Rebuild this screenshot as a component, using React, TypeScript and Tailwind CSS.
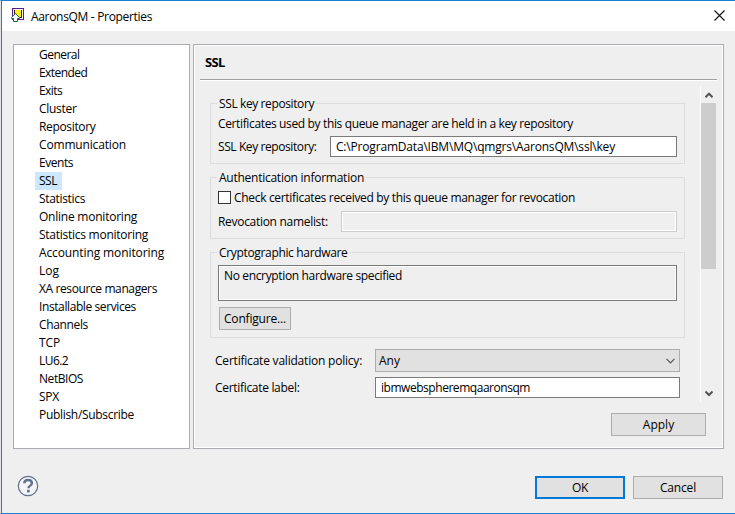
import type { ReactNode } from "react";

const pages: { label: string; tracking: string }[] = [
  { label: "General", tracking: "tracking-[-0.52px]" },
  { label: "Extended", tracking: "tracking-[-0.57px]" },
  { label: "Exits", tracking: "tracking-[-0.57px]" },
  { label: "Cluster", tracking: "tracking-[-0.3px]" },
  { label: "Repository", tracking: "tracking-[-0.34px]" },
  { label: "Communication", tracking: "tracking-[-0.16px]" },
  { label: "Events", tracking: "tracking-[-0.46px]" },
  { label: "SSL", tracking: "tracking-[-0.47px]" },
  { label: "Statistics", tracking: "tracking-[-0.33px]" },
  { label: "Online monitoring", tracking: "tracking-[-0.23px]" },
  { label: "Statistics monitoring", tracking: "tracking-[-0.26px]" },
  { label: "Accounting monitoring", tracking: "tracking-[-0.11px]" },
  { label: "Log", tracking: "tracking-[0px]" },
  { label: "XA resource managers", tracking: "tracking-[-0.39px]" },
  { label: "Installable services", tracking: "tracking-[-0.4px]" },
  { label: "Channels", tracking: "tracking-[-0.35px]" },
  { label: "TCP", tracking: "tracking-[-0.13px]" },
  { label: "LU6.2", tracking: "tracking-[-0.55px]" },
  { label: "NetBIOS", tracking: "tracking-[-0.44px]" },
  { label: "SPX", tracking: "tracking-[-0.24px]" },
  { label: "Publish/Subscribe", tracking: "tracking-[-0.31px]" },
];

function Group({ title, tracking, legendWidth, className, children }: {
  title: string;
  tracking: string;
  legendWidth: string;
  className: string;
  children: ReactNode;
}) {
  return (
    <section className={`ml-[10px] w-[475px] border border-t-0 border-[#dcdcdc] ${className}`}>
      <div className="flex h-px">
        <div className="-ml-px w-[7px] bg-[#dcdcdc]" />
        <div className={`flex items-center pl-[2px] ${legendWidth} ${tracking}`}>
          <span className="pt-px">{title}</span>
        </div>
        <div className="-mr-px flex-1 bg-[#dcdcdc]" />
      </div>
      {children}
    </section>
  );
}

function Button({ className, children }: { className: string; children: ReactNode }) {
  return (
    <button className={`flex h-[23px] items-center justify-center bg-[#e1e1e1] pt-px ${className}`}>{children}</button>
  );
}

export default function App() {
  return (
    <div className="flex h-[514px] w-[735px] flex-col overflow-hidden border-b border-l border-t border-b-[#1a7fd0] border-l-[#dfe3e8] border-t-[#1a7fd0] bg-[#efefef] font-['Open_Sans','Noto_Sans',sans-serif] text-[12px] leading-[18px] whitespace-nowrap text-black">
      <div className="flex min-h-0 flex-1 flex-col border-l border-[#1a7fd0]">
        <header className="flex h-[30px] shrink-0 items-center bg-white pl-[9px]">
          <svg width="14" height="14" viewBox="0 0 14 14" className="mb-[2px]">
            <rect x="1.5" y=".5" width="11" height="11" fill="#fff" stroke="#5c1a82" />
            <rect x="3" y="2" width="8" height="7" fill="#ffee12" />
            <path d="M3.5 2v5M10.5 2v7.500M6 9.500h5" stroke="#222" fill="none" />
            <path d="M4.500 5.600L.6 9.500V10.500H2.500V13.500H6.500V10.500H8.500V9.500Z" fill="#fff" stroke="#0b6e37" />
          </svg>
          <h1 className="ml-[6px] pt-px tracking-[-0.32px]">AaronsQM - Properties</h1>
          <svg width="11" height="11" viewBox="0 0 11 11" className="mb-px ml-auto mr-[10px]">
            <path d="M.5.5l10 10M10.500.5l-10 10" stroke="#111" strokeWidth="1.1" />
          </svg>
        </header>

        <main className="mt-[13px] flex h-[405px] shrink-0 gap-[3px] pl-[11px]">
          <nav className="w-[177px] border border-[#a9abb0] bg-white pl-[21px] pt-px">
            {pages.map((p) => (
              <div
                key={p.label}
                className={`h-[18px] w-fit pl-1 pr-[5px] ${p.tracking} ${p.label === "SSL" ? "bg-[#cce8ff]" : ""}`}
              >
                {p.label}
              </div>
            ))}
          </nav>

          <div className="w-[531px] border border-[#a9abb0]">
            <div className="flex h-full flex-col border border-white">
              <h2 className="mx-[5px] flex h-[34px] shrink-0 items-center border-b border-[#a0a0a0] pb-px pl-[5px] text-[13px] font-bold tracking-[-0.6px] shadow-[0_1px_0_#fff]">
                SSL
              </h2>

              <div className="ml-[5px] mt-[5px] flex h-[318px] pt-px">
                <div className="w-[500px] shrink-0 pt-[17px]">
                  <Group title="SSL key repository" tracking="tracking-[-0.39px]" legendWidth="w-[99px]" className="h-[61px]">
                    <p className="ml-[7px] mt-[11px] tracking-[-0.363px]">
                      Certificates used by this queue manager are held in a key repository
                    </p>
                    <div className="ml-[7px] mt-[3px] flex items-center">
                      <label className="w-[112px] pt-px tracking-[-0.41px]">SSL Key repository:</label>
                      <div className="h-[21px] w-[347px] border border-[#7a7a7a] bg-white pl-[5px] pt-px tracking-[-0.184px]">
                        C:\ProgramData\IBM\MQ\qmgrs\AaronsQM\ssl\key
                      </div>
                    </div>
                  </Group>

                  <Group title="Authentication information" tracking="tracking-[-0.255px]" legendWidth="w-[148px]" className="mt-[13px] h-[62px]">
                    <div className="ml-[7px] mt-[11px] flex items-start">
                      <span className="mt-[2px] size-[13px] border border-[#333] bg-white" />
                      <span className="ml-[3px] tracking-[-0.318px]">
                        Check certificates received by this queue manager for revocation
                      </span>
                    </div>
                    <div className="ml-[7px] mt-[4px] flex items-center">
                      <label className="w-[123px] pt-px tracking-[-0.3px]">Revocation namelist:</label>
                      <div className="h-[21px] w-[336px] border border-[#cccccc] shadow-[inset_0_0_0_1px_#fff]" />
                    </div>
                  </Group>

                  <Group title="Cryptographic hardware" tracking="tracking-[-0.335px]" legendWidth="w-[132px]" className="mt-[13px] h-[86px]">
                    <div className="ml-[7px] mt-[12px] h-[36px] w-[459px] border border-[#7a7a7a] pl-[5px] pt-px tracking-[-0.35px] shadow-[inset_0_0_0_1px_#fff]">
                      No encryption hardware specified
                    </div>
                    <Button className="ml-[8px] mt-[6px] w-[72px] border border-[#adadad] tracking-[-0.18px]">Configure...</Button>
                  </Group>

                  <div className="ml-[15px] mt-[11px] flex items-center">
                    <label className="w-[160px] pt-px tracking-[-0.21px]">Certificate validation policy:</label>
                    <div className="flex h-[23px] w-[305px] items-center justify-between border border-[#adadad] bg-[#e1e1e1] pl-[3px] pr-1">
                      <span className="pt-px">Any</span>
                      <svg width="9" height="6" viewBox="0 0 9 6">
                        <path d="M.5.8l4 4 4-4" fill="none" stroke="#555" strokeWidth="1.2" />
                      </svg>
                    </div>
                  </div>
                  <div className="ml-[15px] mt-[5px] flex items-center">
                    <label className="w-[160px] pt-px tracking-[-0.31px]">Certificate label:</label>
                    <div className="h-[21px] w-[305px] border border-[#7a7a7a] bg-white pl-[5px] pt-px tracking-[-0.459px]">
                      ibmwebspheremqaaronsqm
                    </div>
                  </div>
                </div>

                <div className="flex h-[316px] w-[17px] flex-col border-l border-white">
                  <div className="flex h-[17px] items-center justify-center">
                    <svg width="8" height="7" viewBox="0 0 8 7" className="mr-px mt-px">
                      <path d="M.5 5.2L4 1.700l3.500 3.500" fill="none" stroke="#555" strokeWidth="2" />
                    </svg>
                  </div>
                  <div className="h-[166px] w-[15px] bg-[#cdcdcd]" />
                  <div className="mt-auto flex h-[17px] items-center justify-center">
                    <svg width="8" height="7" viewBox="0 0 8 7" className="mr-px">
                      <path d="M.5 1.500L4 5l3.500-3.500" fill="none" stroke="#555" strokeWidth="2" />
                    </svg>
                  </div>
                </div>
              </div>

              <Button className="ml-auto mr-4 mt-[10px] w-[95px] border border-[#adadad]">Apply</Button>
            </div>
          </div>
        </main>

        <footer className="flex pl-[15px] pt-[26px]">
          <svg width="22" height="22" viewBox="0 0 22 22">
            <circle cx="11" cy="11" r="9.700" fill="#f3f4f7" stroke="#62708c" strokeWidth="1.2" />
            <path d="M7.300 8.300C7.300 5.900 9 5 11 5s3.900 1.100 3.900 3.200c0 2.400-3.500 2.500-3.500 5" fill="none" stroke="#62708c" strokeWidth="2.400" />
            <rect x="10" y="14.800" width="2.700" height="2.600" fill="#62708c" />
          </svg>
          <div className="ml-[496px] flex gap-2 pt-px">
            <Button className="w-[90px] border-2 border-[#0078d7] tracking-[-0.34px]">OK</Button>
            <Button className="w-[90px] border border-[#adadad] tracking-[-0.18px]">Cancel</Button>
          </div>
        </footer>
      </div>
    </div>
  );
}
